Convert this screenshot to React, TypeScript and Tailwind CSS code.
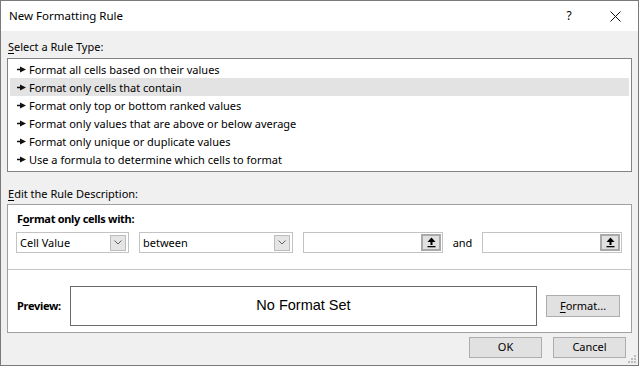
import React from "react";

const rules = [
  "Format all cells based on their values",
  "Format only cells that contain",
  "Format only top or bottom ranked values",
  "Format only values that are above or below average",
  "Format only unique or duplicate values",
  "Use a formula to determine which cells to format",
];

function Arrow() {
  return (
    <svg width="9" height="7" viewBox="0 0 9 7" className="shrink-0">
      <rect x="0" y="2.75" width="4" height="1.5" fill="#111" />
      <polygon points="3,0.5 9,3.5 3,6.5" fill="#111" />
    </svg>
  );
}

function Chevron() {
  return (
    <svg width="8" height="5" viewBox="0 0 8 5">
      <polyline points="0.5,0.5 4,4 7.5,0.5" fill="none" stroke="#606060" strokeWidth="1" />
    </svg>
  );
}

function Combo({ value, width }: { value: string; width: string }) {
  return (
    <div className={`${width} h-[21px] border border-[#c3c3c3] bg-white flex items-center pl-[3px] pr-[2px] shrink-0`}>
      <span className="flex-1 leading-none">{value}</span>
      <div className="w-[16px] h-[16px] bg-[#e5e5e5] border border-[#bcbcbc] flex items-center justify-center">
        <Chevron />
      </div>
    </div>
  );
}

function RefEdit() {
  return (
    <div className="w-[140px] h-[21px] border border-[#c3c3c3] bg-white flex items-center justify-end pr-[1px] shrink-0">
      <div className="w-[20px] h-[17px] bg-[#e1e1e1] border-2 border-[#a9a9a9] flex items-center justify-center">
        <svg width="9" height="11" viewBox="0 0 9 11">
          <polygon points="4.5,0.5 0.5,5 8.5,5" fill="#000" />
          <rect x="3.5" y="4.5" width="2" height="3.5" fill="#000" />
          <rect x="0.5" y="9" width="8" height="1.3" fill="#000" />
        </svg>
      </div>
    </div>
  );
}

export default function App() {
  return (
    <div className="w-[639px] h-[366px] border border-[#7a7a7a] flex flex-col font-['Noto_Sans',sans-serif] text-[11px] text-black overflow-hidden">
      {/* Title bar */}
      <div className="h-[30px] bg-white flex items-center shrink-0">
        <span className="pl-[8px] text-[11.5px]">New Formatting Rule</span>
        <div className="ml-auto flex h-full">
          <div className="w-[46px] h-full flex items-center justify-center text-[12px]">?</div>
          <div className="w-[46px] h-full flex items-center justify-center">
            <svg width="11" height="11" viewBox="0 0 11 11">
              <line x1="0.5" y1="0.5" x2="10.5" y2="10.5" stroke="#111" strokeWidth="1" />
              <line x1="10.5" y1="0.5" x2="0.5" y2="10.5" stroke="#111" strokeWidth="1" />
            </svg>
          </div>
        </div>
      </div>

      {/* Body */}
      <div className="flex-1 bg-[#f0f0f0] px-[6px] flex flex-col relative">
        <div className="pt-[8px] h-[24px] leading-[16px] pl-[1px]">
          <span className="underline underline-offset-2">S</span>elect a Rule Type:
        </div>
        <div className="mt-[3px] h-[114px] border border-[#828282] bg-white pt-[1px] px-[2px]">
          {rules.map((r, i) => (
            <div
              key={r}
              className={`h-[18px] flex items-center pl-[7px] gap-[3px] ${i === 1 ? "bg-[#e3e3e3]" : ""}`}
            >
              <Arrow />
              <span className="leading-none">{r}</span>
            </div>
          ))}
        </div>

        <div className="mt-[14px] h-[16px] leading-[16px] pl-[1px]">
          <span className="underline underline-offset-2">E</span>dit the Rule Description:
        </div>

        <div className="mt-[2px] border border-[#a0a0a0] bg-white">
          <div className="px-[8px] pt-[6px]">
            <div className="h-[16px] leading-[16px] pl-[1px] font-bold tracking-[-0.3px]">
              F<span className="underline underline-offset-2">o</span>rmat only cells with:
            </div>
            <div className="mt-[5px] flex items-center">
              <Combo value="Cell Value" width="w-[113px]" />
              <div className="ml-[10px]">
                <Combo value="between" width="w-[154px]" />
              </div>
              <div className="ml-[10px]">
                <RefEdit />
              </div>
              <div className="w-[39px] text-center leading-none">and</div>
              <RefEdit />
            </div>
          </div>
          <div className="mt-[16px] h-px bg-[#c4c4c4]" />
          <div className="px-[8px] pt-[16px] pb-[6px]">
            <div className="flex items-center">
              <div className="w-[54px] pl-[1px] font-bold tracking-[-0.3px]">Preview:</div>
              <div className="w-[467px] h-[40px] border border-[#6a6a6a] flex items-center justify-center font-['Liberation_Sans',Arial,sans-serif] text-[14.5px]">
                No Format Set
              </div>
              <div className="ml-[9px] w-[74px] h-[22px] bg-[#e1e1e1] border border-[#adadad] flex items-center justify-center">
                <span>
                  <span className="underline underline-offset-2">F</span>ormat...
                </span>
              </div>
            </div>
          </div>
        </div>

        <div className="mt-[4px] flex justify-end pr-[6px] gap-[11px]">
          <div className="w-[73px] h-[21px] bg-[#e1e1e1] border border-[#adadad] flex items-center justify-center">OK</div>
          <div className="w-[73px] h-[21px] bg-[#e1e1e1] border border-[#adadad] flex items-center justify-center">Cancel</div>
        </div>

        <svg className="absolute right-[1px] bottom-[1px]" width="10" height="10" viewBox="0 0 10 10">
          <rect x="7" y="1" width="2" height="2" fill="#bdbdbd" />
          <rect x="4" y="4" width="2" height="2" fill="#bdbdbd" />
          <rect x="7" y="4" width="2" height="2" fill="#bdbdbd" />
          <rect x="1" y="7" width="2" height="2" fill="#bdbdbd" />
          <rect x="4" y="7" width="2" height="2" fill="#bdbdbd" />
          <rect x="7" y="7" width="2" height="2" fill="#bdbdbd" />
        </svg>
      </div>
    </div>
  );
}
